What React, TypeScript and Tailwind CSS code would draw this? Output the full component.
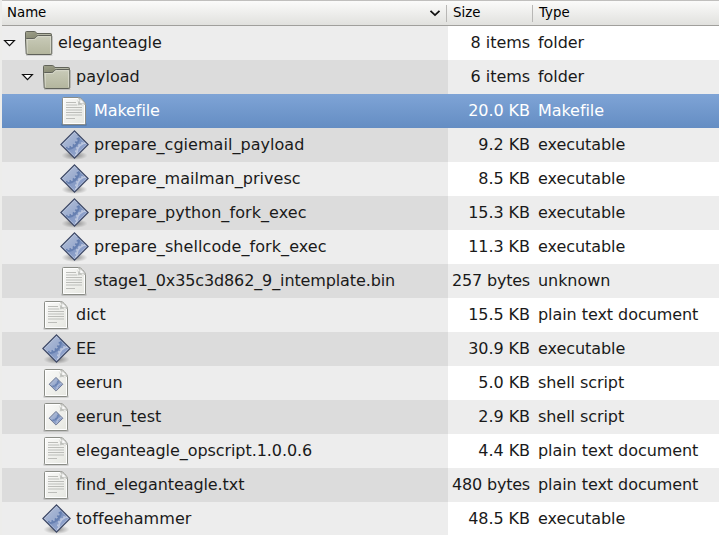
import React from "react";

type Kind = "folder" | "doc" | "exec" | "script";
type Item = {
  name: string;
  kind: Kind;
  level: number;
  size: string;
  type: string;
  tracking?: string;
  selected?: boolean;
};

const items: Item[] = [
  { name: "eleganteagle", kind: "folder", level: 0, size: "8 items", type: "folder", tracking: "tracking-[-0.08px]" },
  { name: "payload", kind: "folder", level: 1, size: "6 items", type: "folder" },
  { name: "Makefile", kind: "doc", level: 2, size: "20.0 KB", type: "Makefile", tracking: "tracking-[-0.08px]", selected: true },
  { name: "prepare_cgiemail_payload", kind: "exec", level: 2, size: "9.2 KB", type: "executable", tracking: "tracking-[0.04px]" },
  { name: "prepare_mailman_privesc", kind: "exec", level: 2, size: "8.5 KB", type: "executable", tracking: "tracking-[0.04px]" },
  { name: "prepare_python_fork_exec", kind: "exec", level: 2, size: "15.3 KB", type: "executable", tracking: "tracking-[0.08px]" },
  { name: "prepare_shellcode_fork_exec", kind: "exec", level: 2, size: "11.3 KB", type: "executable", tracking: "tracking-[0.08px]" },
  { name: "stage1_0x35c3d862_9_intemplate.bin", kind: "doc", level: 2, size: "257 bytes", type: "unknown", tracking: "tracking-[-0.12px]" },
  { name: "dict", kind: "doc", level: 1, size: "15.5 KB", type: "plain text document" },
  { name: "EE", kind: "exec", level: 1, size: "30.9 KB", type: "executable" },
  { name: "eerun", kind: "script", level: 1, size: "5.0 KB", type: "shell script" },
  { name: "eerun_test", kind: "script", level: 1, size: "2.9 KB", type: "shell script" },
  { name: "eleganteagle_opscript.1.0.0.6", kind: "doc", level: 1, size: "4.4 KB", type: "plain text document", tracking: "tracking-[-0.07px]" },
  { name: "find_eleganteagle.txt", kind: "doc", level: 1, size: "480 bytes", type: "plain text document", tracking: "tracking-[-0.08px]" },
  { name: "toffeehammer", kind: "exec", level: 1, size: "48.5 KB", type: "executable", tracking: "tracking-[0.08px]" },
];

const indents = ["pl-0", "pl-[18px]", "pl-9"];

function Gradients() {
  return (
    <svg width="0" height="0" className="absolute">
      <defs>
        <linearGradient id="folderFront" x1="0" y1="0" x2="0" y2="1">
          <stop offset="0" stopColor="#c9cbb9" />
          <stop offset="1" stopColor="#b3b59d" />
        </linearGradient>
        <linearGradient id="folderBack" x1="0" y1="0" x2="1" y2="1">
          <stop offset="0" stopColor="#a0a28c" />
          <stop offset="1" stopColor="#74765f" />
        </linearGradient>
        <linearGradient id="paper" x1="0" y1="0" x2="1" y2="1">
          <stop offset="0" stopColor="#fafaf9" />
          <stop offset="1" stopColor="#e6e7e1" />
        </linearGradient>
        <linearGradient id="diamond" x1="0.3" y1="0" x2="0.7" y2="1">
          <stop offset="0" stopColor="#6880ae" />
          <stop offset="0.5" stopColor="#7f95c1" />
          <stop offset="1" stopColor="#98a9cf" />
        </linearGradient>
        <linearGradient id="gear" x1="0" y1="0" x2="1" y2="1">
          <stop offset="0.4" stopColor="#b3bfd8" />
          <stop offset="1" stopColor="#92a5cb" />
        </linearGradient>
        <radialGradient id="shade">
          <stop offset="0" stopColor="#000" stopOpacity="0.42" />
          <stop offset="1" stopColor="#000" stopOpacity="0" />
        </radialGradient>
        <clipPath id="diamondClip">
          <path d="M16.5 3 30 16.5 16.5 30 3 16.5Z" />
        </clipPath>
      </defs>
    </svg>
  );
}

function Folder() {
  return (
    <>
      <path d="M4 28.8H30.5V30H4Z" fill="#000" opacity="0.12" />
      <path d="M4.5 5.5H12.6Q13.5 5.5 14 6.4L14.8 7.5H28.5Q29.5 7.5 29.5 8.5V14H3.5V6.5Q3.5 5.5 4.5 5.5Z" fill="url(#folderBack)" stroke="#62645a" />
      <path d="M14.8 8.5H28.5" stroke="#b4b6a5" />
      <path d="M4.5 12.5H11.8Q12.8 12.5 13.5 11.6L14.6 10.5Q15.1 9.5 16.3 9.5H28.8Q29.8 9.5 29.8 10.5V27.5Q29.8 28.5 28.8 28.5H5.3Q4.3 28.5 4.2 27.5L3.5 13.5Q3.5 12.5 4.5 12.5Z" fill="url(#folderFront)" stroke="#5f615a" />
      <path d="M5.3 27V13.5H12.3Q13.5 13.3 14.3 12.3L15.7 10.7H28.5V27" fill="none" stroke="#e0e1d6" opacity="0.65" />
    </>
  );
}

function Page() {
  return (
    <>
      <path d="M3.5 29.5H28.5V31.6H3.5Z" fill="#000" opacity="0.2" />
      <path d="M5.5 3.5H20.5Q22.5 3.5 24.5 5.8Q27.5 9 27.5 10.5V29.5Q27.5 30.5 26.5 30.5H5.5Q4.5 30.5 4.5 29.5V4.5Q4.5 3.5 5.5 3.5Z" fill="url(#paper)" stroke="#8b8d87" />
      <path d="M5.5 29.5V4.5H20M26.5 11V29.5H6" fill="none" stroke="#fff" opacity="0.9" />
      <path d="M18.5 5Q21 8 19.5 11.5Q23.5 10.2 26.5 12.5L22 9Z" fill="#a9aba6" opacity="0.6" />
      <path d="M20.6 4Q22.6 6 21.6 9.5Q25.3 8.4 27.2 10.8Q26.2 6.6 20.6 4Z" fill="#fdfdfd" stroke="#a4a6a1" strokeWidth="0.6" />
    </>
  );
}

function Doc() {
  return (
    <>
      <Page />
      <path d="M8 8.5H18M8 11H19M8 13.5H24M8 16H24M8 18.5H24M8 21H24M8 24.5H17" stroke="#bcbdb9" strokeWidth="1.1" />
    </>
  );
}

function Gem() {
  return (
    <>
      <path d="M16.5 3 30 16.5 16.5 30 3 16.5Z" fill="url(#diamond)" />
      <g clipPath="url(#diamondClip)">
        <circle cx="9.5" cy="9.5" r="12.4" fill="#5d78ab" opacity="0.75" />
        <circle cx="8" cy="8" r="11" fill="url(#gear)" />
        <circle cx="8" cy="8" r="11.4" fill="none" stroke="#a3b2d2" strokeWidth="2" strokeDasharray="1.8 1.8" />
        <circle cx="29" cy="25" r="10.5" fill="#8da0ca" />
        <circle cx="29" cy="25" r="10.2" fill="none" stroke="#bac5de" strokeWidth="1.6" />
        <circle cx="29" cy="25" r="11.3" fill="none" stroke="#bac5de" strokeWidth="1.6" strokeDasharray="1.8 1.8" />
      </g>
      <path d="M16.5 4.3 28.7 16.5 16.5 28.7 4.3 16.5Z" fill="none" stroke="#d4dbeb" strokeWidth="0.8" opacity="0.5" />
      <path d="M16.5 2.8 30.2 16.5 16.5 30.2 2.8 16.5Z" fill="none" stroke="#3c4663" strokeWidth="1.1" />
    </>
  );
}

function Icon({ kind }: { kind: Kind }) {
  return (
    <svg width="32" height="34" viewBox="0 0 32 34" className="shrink-0">
      {kind === "folder" && <Folder />}
      {kind === "doc" && <Doc />}
      {kind === "exec" && (
        <>
          <ellipse cx="16.5" cy="27.5" rx="13" ry="4.5" fill="url(#shade)" />
          <Gem />
        </>
      )}
      {kind === "script" && (
        <>
          <Page />
          <g transform="translate(7.75 10) scale(0.5)">
            <Gem />
          </g>
        </>
      )}
    </svg>
  );
}

function Expander() {
  return (
    <svg width="20" height="34" viewBox="0 0 20 34" className="shrink-0">
      <path d="M2.6 14.5H12.4L7.5 19.7Z" fill="#fff" stroke="#111" strokeWidth="1.2" />
    </svg>
  );
}

function Row({ item, odd }: { item: Item; odd: boolean }) {
  const tone = item.selected
    ? "bg-linear-to-b from-[#7fa4d6] to-[#648dc3] text-white"
    : odd
      ? "bg-[#ededed] text-[#1a1a1a]"
      : "bg-white text-[#1a1a1a]";
  const nameTone = item.selected ? "" : odd ? "bg-[#dcdcdc]" : "bg-[#ededed]";
  const sizeTracking = item.size.endsWith("bytes") ? "tracking-[-0.2px]" : "tracking-[-0.05px]";
  return (
    <div className={`flex h-[34px] shrink-0 items-center ${tone}`}>
      <div className={`flex h-full w-[446px] shrink-0 items-center ${nameTone} ${indents[item.level]}`}>
        {item.kind === "folder" ? <Expander /> : <span className="w-5 shrink-0" />}
        <Icon kind={item.kind} />
        <span className={`ml-1 pb-px ${item.tracking ?? ""}`}>{item.name}</span>
      </div>
      <span className={`w-[82px] shrink-0 pb-px text-right ${sizeTracking}`}>{item.size}</span>
      <span className="ml-2 pb-px tracking-[-0.06px]">{item.type}</span>
    </div>
  );
}

export default function App() {
  return (
    <div className="flex h-[535px] w-[719px] flex-col overflow-hidden bg-[#ededeb] pl-0.5 font-['DejaVu_Sans',sans-serif] text-[16px] leading-6 whitespace-nowrap">
      <Gradients />
      <div className="flex h-[26px] shrink-0 items-center border-t border-b border-t-[#c0bfbd] border-b-[#a09f9c] bg-linear-to-b from-[#fbfbfa] to-[#e1e1de] text-[13.33px] text-black">
        <div className="flex w-[444px] shrink-0 items-center justify-between pr-[5px] pl-[5px]">
          <span>Name</span>
          <svg width="12" height="12" viewBox="0 0 12 12">
            <path d="M1.5 3.8 6 8.1 10.5 3.8" fill="none" stroke="#111" strokeWidth="1.8" />
          </svg>
        </div>
        <div className="flex h-[17px] w-[86px] shrink-0 items-center border-l border-[#b8b7b5] pl-1.5">Size</div>
        <div className="flex h-[17px] items-center border-l border-[#b8b7b5] pl-1.5">Type</div>
      </div>
      {items.map((item, i) => (
        <Row key={item.name} item={item} odd={i % 2 === 1} />
      ))}
    </div>
  );
}
